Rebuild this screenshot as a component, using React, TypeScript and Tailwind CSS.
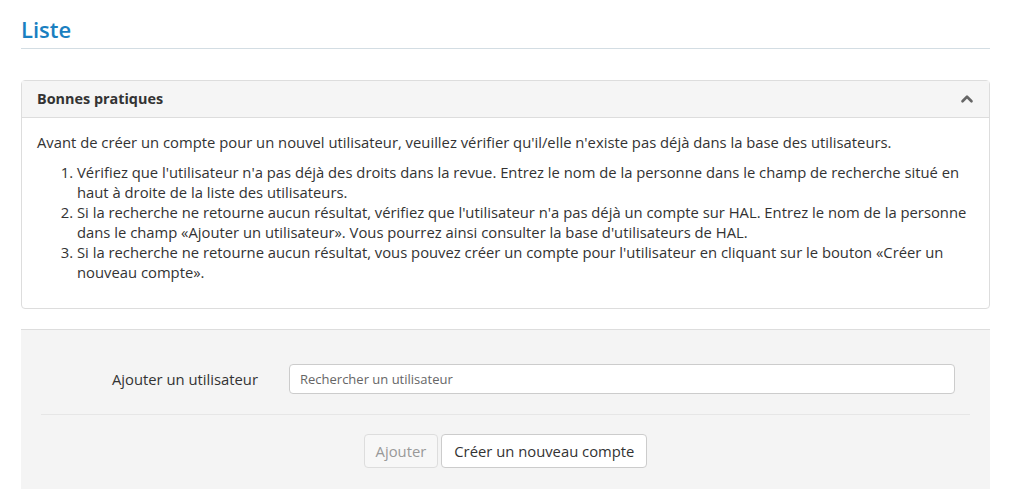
import { ChevronUp } from "lucide-react";

const steps = [
  "Vérifiez que l'utilisateur n'a pas déjà des droits dans la revue. Entrez le nom de la personne dans le champ de recherche situé en haut à droite de la liste des utilisateurs.",
  "Si la recherche ne retourne aucun résultat, vérifiez que l'utilisateur n'a pas déjà un compte sur HAL. Entrez le nom de la personne dans le champ «Ajouter un utilisateur». Vous pourrez ainsi consulter la base d'utilisateurs de HAL.",
  "Si la recherche ne retourne aucun résultat, vous pouvez créer un compte pour l'utilisateur en cliquant sur le bouton «Créer un nouveau compte».",
];

export default function App() {
  return (
    <div className="min-h-screen bg-white px-[21px] pt-[16px] text-[14.8px] text-[#333] font-['Open_Sans',sans-serif]">
      <h1 className="border-b border-[#d3dde3] pb-[6px] text-[22px] font-semibold leading-[26px] text-[#1a7fc1]">
        Liste
      </h1>

      <div className="mt-[31px] rounded-[4px] border border-[#ddd]">
        <div className="flex items-center justify-between border-b border-[#ddd] bg-[#f5f5f5] px-[15px] py-[8px]">
          <span className="text-[14.4px] font-bold leading-[20px] text-[#333]">Bonnes pratiques</span>
          <ChevronUp size={18} strokeWidth={3.5} className="mr-[-2px] text-[#666]" />
        </div>
        <div className="px-[15px] pb-[26px] pt-[14px] leading-[20px]">
          <p className="mb-[10px]">
            Avant de créer un compte pour un nouvel utilisateur, veuillez vérifier qu'il/elle n'existe pas déjà dans la base des utilisateurs.
          </p>
          <ol className="list-decimal pl-[40px]">
            {steps.map((s) => (
              <li key={s}>{s}</li>
            ))}
          </ol>
        </div>
      </div>

      <div className="mt-[20px] border-t border-[#ddd] bg-[#f4f4f4] px-[20px] pb-[22px] pt-[34px]">
        <div className="flex items-center">
          <label className="w-[217px] text-right">Ajouter un utilisateur</label>
          <input
            placeholder="Rechercher un utilisateur"
            className="ml-[31px] mr-[15px] h-[30px] flex-1 rounded-[4px] border border-[#ccc] bg-white px-[10px] text-[13px] text-[#555] placeholder:text-[#666] outline-none"
          />
        </div>
        <div className="mt-[20px] border-t border-[#e6e6e6]" />
        <div className="mt-[19px] flex justify-center gap-[3px]">
          <button className="h-[34px] rounded-[4px] border border-[#ddd] bg-[#f7f7f7] px-[11px] text-[#999]">
            Ajouter
          </button>
          <button className="h-[34px] rounded-[4px] border border-[#ccc] bg-white px-[12px] text-[#333]">
            Créer un nouveau compte
          </button>
        </div>
      </div>
    </div>
  );
}
